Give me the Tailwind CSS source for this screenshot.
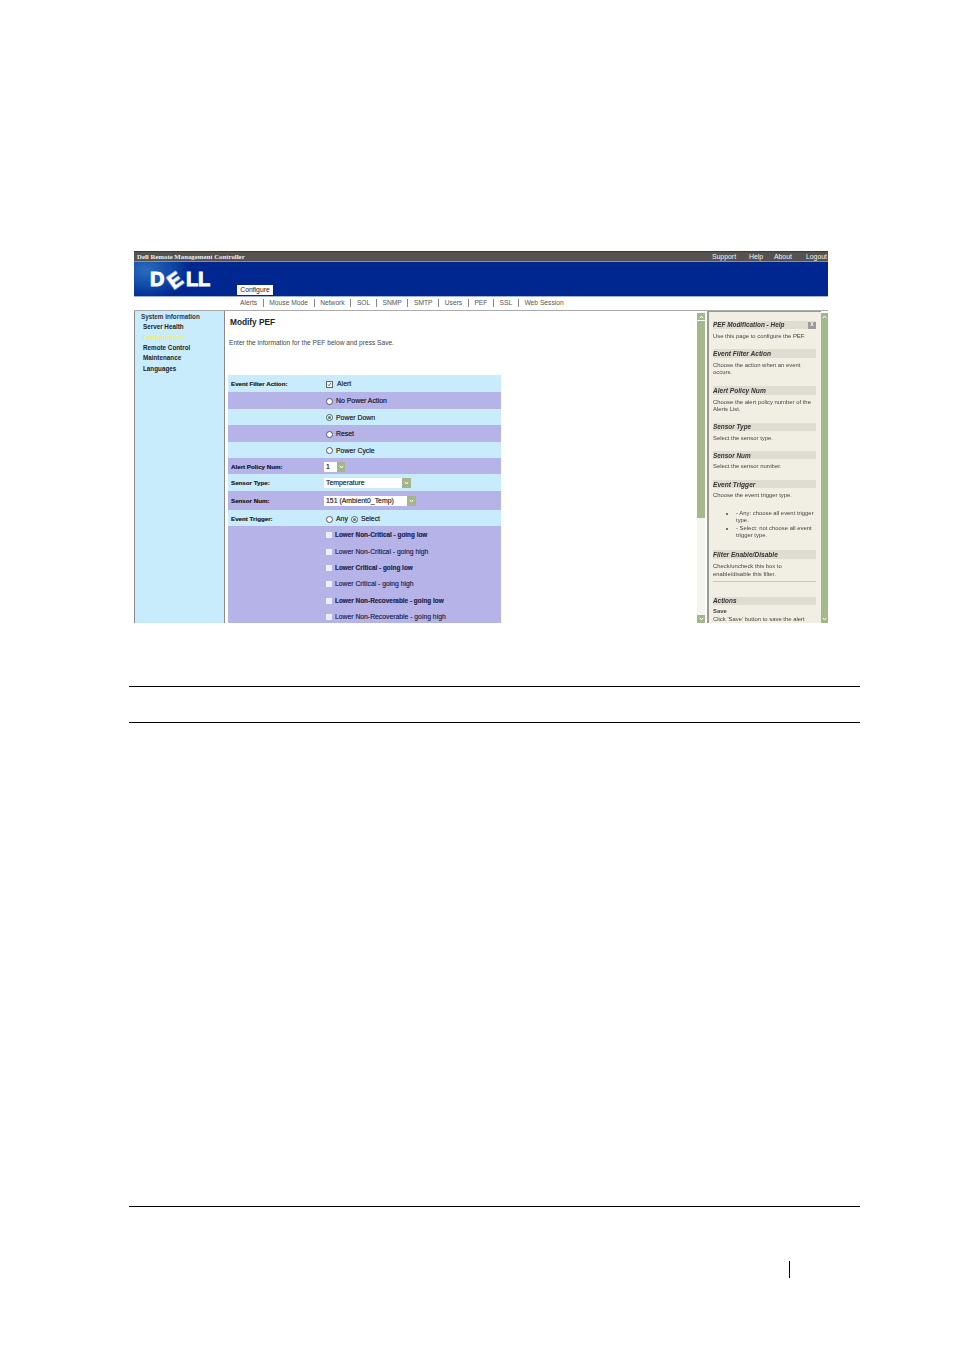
<!DOCTYPE html>
<html>
<head>
<meta charset="utf-8">
<script src="https://cdn.jsdelivr.net/npm/@tailwindcss/browser@4"></script>
</head>
<body class="bg-white">
<div class="w-[954px] h-[1351px] bg-white pt-[251px] overflow-hidden font-['Liberation_Sans',Arial,sans-serif]">
  <!-- embedded screenshot -->
  <div class="ml-[134px] w-[694px] h-[372px] overflow-hidden flex flex-col blur-[0.4px] text-[6.8px] leading-[8px] text-[#333]">
    <div class="h-[10px] shrink-0 bg-[#55524f] border-t border-[#3a3a3a] flex items-center justify-between pl-[3px] text-white font-bold">
      <span class="font-['Liberation_Serif',serif] text-[6.8px] text-[#eeeeee]">Dell Remote Management Controller</span>
      <div class="flex text-[6.9px] font-normal text-[#f2f2f2] mr-[1px]">
        <span class="w-[37px]">Support</span><span class="w-[25px]">Help</span><span class="w-[32px]">About</span><span>Logout</span>
      </div>
    </div>
    <div class="h-[35px] shrink-0 bg-[radial-gradient(ellipse_45px_30px_at_12px_8px,#2a6cc0_0,#0f4aa6_55%,#00268f_100%)] bg-[#00268f] border-t border-[#7f8fb8] relative flex items-start">
      <div class="ml-[16px] mt-[8px] flex items-center h-[18px] text-white font-bold text-[20px] leading-[18px] [-webkit-text-stroke:1px_white]">
        <span class="w-[18px]">D</span><span class="w-[18px] inline-block -rotate-[35deg]">E</span><span class="w-[12px]">L</span><span class="w-[10px]">L</span>
      </div>
      <div class="absolute left-[103px] bottom-[1px] w-[36px] h-[10px] bg-white text-[#222] text-[6.8px] flex items-center justify-center">Configure</div>
    </div>
    <div class="h-[15px] shrink-0 bg-white border-b border-[#aaa] border-t border-t-[#9fb4d0] pl-[106px] pb-[2px] flex items-center gap-[5.6px] text-[#555] text-[6.7px]">
      <span>Alerts</span><i class="w-px h-[8px] bg-[#888]"></i><span>Mouse Mode</span><i class="w-px h-[8px] bg-[#888]"></i><span>Network</span><i class="w-px h-[8px] bg-[#888]"></i><span>SOL</span><i class="w-px h-[8px] bg-[#888]"></i><span>SNMP</span><i class="w-px h-[8px] bg-[#888]"></i><span>SMTP</span><i class="w-px h-[8px] bg-[#888]"></i><span>Users</span><i class="w-px h-[8px] bg-[#888]"></i><span>PEF</span><i class="w-px h-[8px] bg-[#888]"></i><span>SSL</span><i class="w-px h-[8px] bg-[#888]"></i><span>Web Session</span>
    </div>
    <div class="flex-1 flex min-h-0">
      <!-- side nav -->
      <div class="w-[91px] shrink-0 bg-[#c9ecfd] border-l border-r border-[#8a8a8a] pl-[6px] pt-[1px] text-[#222] font-bold">
        <div class="h-[10px] flex items-center text-[6.3px] text-[#334]">System Information</div>
        <div class="pl-[2px] text-[6.3px]">
          <div class="h-[10.4px] flex items-center">Server Health</div>
          <div class="h-[10.4px] flex items-center text-[#eef25a]">Configuration</div>
          <div class="h-[10.4px] flex items-center">Remote Control</div>
          <div class="h-[10.4px] flex items-center">Maintenance</div>
          <div class="h-[10.4px] flex items-center">Languages</div>
        </div>
      </div>
      <!-- main -->
      <div class="w-[472px] shrink-0 pl-[3px] bg-white">
        <div class="pl-[2px] pt-[6px] h-[11px] box-content text-[8.3px] leading-[11px] font-bold text-[#222]">Modify PEF</div>
        <div class="pt-[11px] pb-[28px] pl-[1px] text-[6.6px] text-[#444]">Enter the information for the PEF below and press Save.</div>
        <div class="w-[273px] text-[6.9px] text-[#333] [text-shadow:0_0_0.3px_#556]">
          <div class="h-[17px] pt-[1px] bg-[#c9ecfd] flex items-center"><b class="w-[98px] pl-[3px] text-[6.2px] text-[#333]">Event Filter Action:</b><span class="w-[7px] h-[7px] border border-[#666] bg-white flex items-center justify-center"><svg width="5" height="5" viewBox="0 0 5 5"><path d="M1 2.5l1 1.2L4 1" fill="none" stroke="#333" stroke-width="0.8"/></svg></span><span class="ml-[4px]">Alert</span></div>
          <div class="h-[16.5px] pt-[2px] bg-[#b6b3e8] flex items-center pl-[98px]"><i class="w-[7px] h-[7px] rounded-full border border-[#556] bg-white"></i><span class="ml-[3px] text-[#223]">No Power Action</span></div>
          <div class="h-[16.5px] pt-[2px] bg-[#c9ecfd] flex items-center pl-[98px]"><i class="w-[7px] h-[7px] rounded-full border border-[#556] bg-white flex items-center justify-center"><i class="w-[3px] h-[3px] rounded-full bg-[#3a8a6a]"></i></i><span class="ml-[3px]">Power Down</span></div>
          <div class="h-[16.5px] pt-[2px] bg-[#b6b3e8] flex items-center pl-[98px]"><i class="w-[7px] h-[7px] rounded-full border border-[#556] bg-white"></i><span class="ml-[3px] text-[#223]">Reset</span></div>
          <div class="h-[16.5px] pt-[2px] bg-[#c9ecfd] flex items-center pl-[98px]"><i class="w-[7px] h-[7px] rounded-full border border-[#556] bg-white"></i><span class="ml-[3px]">Power Cycle</span></div>
          <div class="h-[16px] pt-[1px] bg-[#b6b3e8] flex items-center"><b class="w-[96px] pl-[3px] text-[6.2px] text-[#223]">Alert Policy Num:</b><span class="w-[13px] h-[10px] bg-white flex items-center pl-[2px]">1</span><span class="w-[8px] h-[10px] bg-[#a3b58a] flex items-center justify-center"><svg width="5" height="4" viewBox="0 0 5 4"><path d="M.8 .8L2.5 3L4.2 .8" fill="none" stroke="#fff" stroke-width="1"/></svg></span></div>
          <div class="h-[17px] pt-[1px] bg-[#c9ecfd] flex items-center"><b class="w-[96px] pl-[3px] text-[6.2px]">Sensor Type:</b><span class="w-[78px] h-[10px] bg-white flex items-center pl-[2px] text-[#444]">Temperature</span><span class="w-[9px] h-[10px] bg-[#a3b58a] flex items-center justify-center"><svg width="5" height="4" viewBox="0 0 5 4"><path d="M.8 .8L2.5 3L4.2 .8" fill="none" stroke="#fff" stroke-width="1"/></svg></span></div>
          <div class="h-[19px] bg-[#b6b3e8] flex items-center"><b class="w-[96px] pl-[3px] text-[6.2px] text-[#223]">Sensor Num:</b><span class="w-[83px] h-[10px] bg-white flex items-center pl-[2px] text-[#444]">151 (Ambient0_Temp)</span><span class="w-[9px] h-[10px] bg-[#a3b58a] flex items-center justify-center"><svg width="5" height="4" viewBox="0 0 5 4"><path d="M.8 .8L2.5 3L4.2 .8" fill="none" stroke="#fff" stroke-width="1"/></svg></span></div>
          <div class="h-[16px] pt-[2px] bg-[#c9ecfd] flex items-center"><b class="w-[98px] pl-[3px] text-[6.2px]">Event Trigger:</b><i class="w-[7px] h-[7px] rounded-full border border-[#556] bg-white"></i><span class="ml-[3px]">Any</span><i class="ml-[3px] w-[7px] h-[7px] rounded-full border border-[#556] bg-white flex items-center justify-center"><i class="w-[3px] h-[3px] rounded-full bg-[#3a8a6a]"></i></i><span class="ml-[3px]">Select</span></div>
          <div class="bg-[#b6b3e8] pl-[98px] text-[#2f2f60] font-bold">
            <div class="h-[16.4px] pt-[2px] flex items-center text-[6.4px]"><i class="w-[6px] h-[6px] bg-[#eeeef8]"></i><span class="ml-[3px]">Lower Non-Critical - going low</span></div>
            <div class="h-[16.4px] pt-[2px] flex items-center text-[6.8px] font-normal"><i class="w-[6px] h-[6px] bg-[#eeeef8]"></i><span class="ml-[3px]">Lower Non-Critical - going high</span></div>
            <div class="h-[16.4px] pt-[2px] flex items-center text-[6.4px]"><i class="w-[6px] h-[6px] bg-[#eeeef8]"></i><span class="ml-[3px]">Lower Critical - going low</span></div>
            <div class="h-[16.4px] pt-[2px] flex items-center text-[6.8px] font-normal"><i class="w-[6px] h-[6px] bg-[#eeeef8]"></i><span class="ml-[3px]">Lower Critical - going high</span></div>
            <div class="h-[16.4px] pt-[2px] flex items-center text-[6.4px]"><i class="w-[6px] h-[6px] bg-[#eeeef8]"></i><span class="ml-[3px]">Lower Non-Recoverable - going low</span></div>
            <div class="h-[16.4px] pt-[2px] flex items-center text-[6.8px] font-normal"><i class="w-[6px] h-[6px] bg-[#eeeef8]"></i><span class="ml-[3px]">Lower Non-Recoverable - going high</span></div>
          </div>
        </div>
      </div>
      <!-- main scrollbar -->
      <div class="w-[8px] shrink-0 mr-[2px] mt-[2px] flex flex-col bg-[#f4f6ee]">
        <div class="h-[7px] bg-[#a3b58a] flex items-center justify-center"><svg width="5" height="4" viewBox="0 0 5 4"><path d="M.8 3.2L2.5 1L4.2 3.2" fill="none" stroke="#fff" stroke-width="1"/></svg></div>
        <div class="h-[197px] bg-[#a3b98c] mt-[1px]"></div>
        <div class="flex-1"></div>
        <div class="h-[8px] bg-[#a3b58a] flex items-center justify-center"><svg width="5" height="4" viewBox="0 0 5 4"><path d="M.8 .8L2.5 3L4.2 .8" fill="none" stroke="#fff" stroke-width="1"/></svg></div>
      </div>
      <!-- help panel -->
      <div class="w-[114px] shrink-0 bg-[#f1efe4] border-l-2 border-t border-[#9a9a90] overflow-hidden pl-[4px] pr-[5px] pt-[9px] text-[5.9px] leading-[7.2px] text-[#444]">
        <div class="h-[8px] bg-[#dfddd2] flex items-center justify-between font-bold italic text-[6.4px] text-[#333]"><span>PEF Modification - Help</span><span class="w-[8px] h-[7px] bg-[#9a9a9a] text-white not-italic text-[5px] flex items-center justify-center">X</span></div>
        <p class="mt-[4px]">Use this page to configure the PEF.</p>
        <div class="mt-[9px] h-[9px] bg-[#dfddd2] flex items-center font-bold italic text-[6.6px] text-[#333]">Event Filter Action</div>
        <p class="mt-[4px]">Choose the action when an event occurs.</p>
        <div class="mt-[9px] h-[9px] bg-[#dfddd2] flex items-center font-bold italic text-[6.6px] text-[#333]">Alert Policy Num</div>
        <p class="mt-[4px]">Choose the alert policy number of the Alerts List.</p>
        <div class="mt-[10px] h-[8px] bg-[#dfddd2] flex items-center font-bold italic text-[6.4px] text-[#333]">Sensor Type</div>
        <p class="mt-[4px]">Select the sensor type.</p>
        <div class="mt-[9px] h-[8px] bg-[#dfddd2] flex items-center font-bold italic text-[6.4px] text-[#333]">Sensor Num</div>
        <p class="mt-[4px]">Select the sensor number.</p>
        <div class="mt-[10px] h-[8px] bg-[#dfddd2] flex items-center font-bold italic text-[6.6px] text-[#333]">Event Trigger</div>
        <p class="mt-[4px]">Choose the event trigger type.</p>
        <ul class="mt-[10px] ml-[23px] list-disc">
          <li>- Any: choose all event trigger type.</li>
          <li class="mt-[1px]">- Select: not choose all event trigger type.</li>
        </ul>
        <div class="mt-[11px] h-[9px] bg-[#dfddd2] flex items-center font-bold italic text-[6.6px] text-[#333]">Filter Enable/Disable</div>
        <p class="mt-[4px]">Check/uncheck this box to enable/disable this filter.</p>
        <div class="mt-[3px] h-px bg-[#c8c8bc]"></div>
        <div class="mt-[15px] h-[8px] bg-[#dfddd2] flex items-center font-bold italic text-[6.4px] text-[#333]">Actions</div>
        <p class="mt-[3px] font-bold">Save</p>
        <p class="mt-[1px]">Click 'Save' button to save the alert</p>
      </div>
      <!-- help scrollbar -->
      <div class="w-[7px] shrink-0 mt-[2px] flex flex-col">
        <div class="h-[7px] bg-[#a3b58a] flex items-center justify-center"><svg width="5" height="4" viewBox="0 0 5 4"><path d="M.8 3.2L2.5 1L4.2 3.2" fill="none" stroke="#fff" stroke-width="1"/></svg></div>
        <div class="flex-1 bg-[#a3b98c]"></div>
        <div class="h-[8px] bg-[#a3b58a] flex items-center justify-center"><svg width="5" height="4" viewBox="0 0 5 4"><path d="M.8 .8L2.5 3L4.2 .8" fill="none" stroke="#fff" stroke-width="1"/></svg></div>
      </div>
    </div>
  </div>
  <!-- page rules -->
  <div class="ml-[129px] w-[731px] mt-[63px] h-px bg-black"></div>
  <div class="ml-[129px] w-[731px] mt-[35px] h-px bg-black"></div>
  <div class="ml-[129px] w-[731px] mt-[483px] h-px bg-black"></div>
  <div class="ml-[789px] mt-[54px] w-px h-[17px] bg-black"></div>
</div>
</body>
</html>
